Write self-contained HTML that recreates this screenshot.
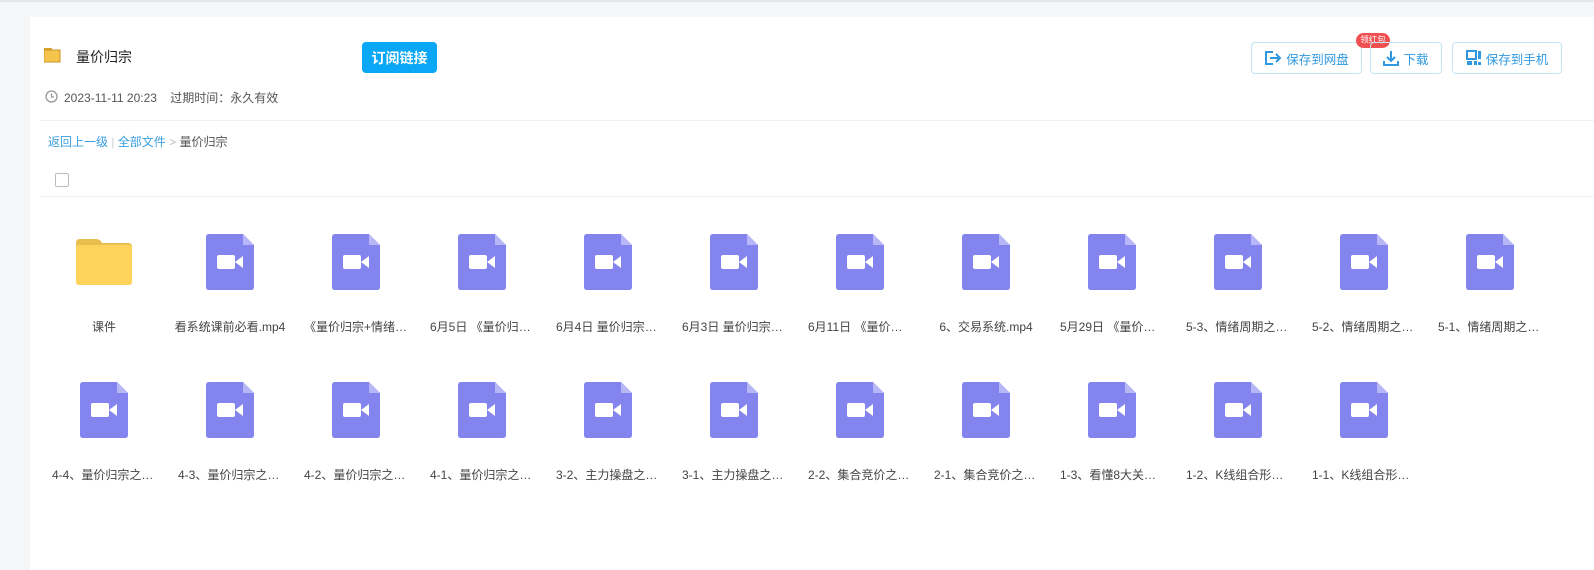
<!DOCTYPE html><html><head><meta charset="utf-8"><style>
*{margin:0;padding:0;box-sizing:border-box}
body{width:1594px;height:570px;background:#f5f6f7;font-family:"Liberation Sans","Noto Sans CJK SC",sans-serif;position:relative;overflow:hidden;font-size:12px;color:#333}
.top{position:absolute;left:0;top:0;width:1594px;height:2px;background:#e3e6ea}
.card{position:absolute;left:30px;top:17px;right:0;bottom:0;background:#fff}
.abs{position:absolute}
.btn{position:absolute;top:42px;height:32px;border:1px solid #c3e4f7;border-radius:4px;color:#2f98e0;font-size:12.5px;display:flex;align-items:center;justify-content:center;gap:4px}
.grid{position:absolute;left:41px;top:234px;width:1540px}
.cell{position:absolute;width:126px;height:120px}
.cell .ic{position:absolute;left:39px;top:0}
.cell .t{position:absolute;left:11px;top:84px;width:104px;text-align:center;white-space:nowrap;overflow:hidden;text-overflow:ellipsis;font-size:12px;color:#444}
.cell .t.w{left:3px;width:120px}
</style></head><body>
<div class="top"></div>
<div class="card"></div>
<svg class="abs" style="left:44px;top:48px" width="18" height="15"><rect x="0" y="0" width="8" height="4" fill="#d9a22e"/><rect x="0" y="2" width="16" height="12" fill="#f4c44c" stroke="#c9952a" stroke-width="1"/></svg>
<div class="abs" style="left:76px;top:47px;font-size:14px;color:#222">量价归宗</div>
<div class="abs" style="left:362px;top:42px;width:75px;height:31px;background:#09a7f5;border-radius:4px;color:#fff;font-size:14px;font-weight:bold;display:flex;align-items:center;justify-content:center">订阅链接</div>
<svg class="abs" style="left:45px;top:90px" width="13" height="13"><circle cx="6.5" cy="6.5" r="5.5" fill="none" stroke="#999" stroke-width="1.3"/><path d="M6.5 3.5V7H9" fill="none" stroke="#999" stroke-width="1.3"/></svg>
<div class="abs" style="left:64px;top:89px;color:#555">2023-11-11 20:23&nbsp;&nbsp;&nbsp;&nbsp;过期时间：永久有效</div>
<div class="abs" style="left:40px;top:120px;width:1554px;height:1px;background:#f0f0f0"></div>
<div class="abs" style="left:48px;top:133px;color:#3a9ede">返回上一级 <span style="color:#ccc">|</span> 全部文件 <span style="color:#bbb">&gt;</span> <span style="color:#555">量价归宗</span></div>
<div class="abs" style="left:55px;top:173px;width:14px;height:14px;border:1px solid #bbb;border-radius:2px"></div>
<div class="abs" style="left:40px;top:196px;width:1554px;height:1px;background:#f0f0f0"></div>
<div class="btn" style="left:1251px;width:111px"><svg width="18" height="16"><path d="M9 2H2v12h7" fill="none" stroke="#2f98e0" stroke-width="2"/><path d="M6 8h10M12 4l4 4-4 4" fill="none" stroke="#2f98e0" stroke-width="2"/></svg>保存到网盘</div>
<div class="abs" style="left:1356px;top:33px;width:34px;height:15px;background:#f0504f;border-radius:8px;color:#fff;font-size:10px;line-height:15px;text-align:center;overflow:hidden;white-space:nowrap"><span style="display:inline-block;transform:scale(0.85)">领红包</span></div>
<div class="btn" style="left:1370px;width:72px"><svg width="16" height="16"><path d="M8 1v10M4 7l4 4 4-4" fill="none" stroke="#2f98e0" stroke-width="2"/><path d="M1 11v4h14v-4" fill="none" stroke="#2f98e0" stroke-width="2"/></svg>下载</div>
<div class="btn" style="left:1452px;width:110px"><svg width="16" height="16"><rect x="1" y="1" width="9" height="8" fill="none" stroke="#2f98e0" stroke-width="2"/><rect x="12" y="1" width="3" height="8" fill="#2f98e0"/><rect x="1" y="11" width="5" height="4" fill="#2f98e0"/><rect x="8" y="11" width="3" height="4" fill="#2f98e0"/><rect x="12" y="12" width="3" height="3" fill="#2f98e0"/></svg>保存到手机</div>
<div class="grid" id="g"></div>
<script>
var x="短线交易课程.mp4";
var n=["课件","看系统课前必看.mp4","《量价归宗+情绪周期》"+x,"6月5日 《量价归宗》"+x,"6月4日 量价归宗之"+x,"6月3日 量价归宗之"+x,"6月11日 《量价归宗》"+x,"6、交易系统.mp4","5月29日 《量价归宗》"+x,"5-3、情绪周期之"+x,"5-2、情绪周期之"+x,"5-1、情绪周期之"+x,"4-4、量价归宗之"+x,"4-3、量价归宗之"+x,"4-2、量价归宗之"+x,"4-1、量价归宗之"+x,"3-2、主力操盘之"+x,"3-1、主力操盘之"+x,"2-2、集合竞价之"+x,"2-1、集合竞价之"+x,"1-3、看懂8大关键点位"+x,"1-2、K线组合形态之"+x,"1-1、K线组合形态之"+x];
var vid='<svg class="ic" width="48" height="56"><path d="M3 0H37L48 11V53Q48 56 45 56H3Q0 56 0 53V3Q0 0 3 0Z" fill="#8484ef"/><path d="M37 0L48 11H37Z" fill="#b7b7f7"/><rect x="11" y="21" width="18" height="14" rx="2" fill="#fff"/><path d="M29 28L37 22V34Z" fill="#fff"/></svg>';
var fol='<svg class="ic" style="left:35px;top:5px" width="56" height="46"><path d="M0 4Q0 0 4 0H20Q24 0 26 4H52Q56 4 56 8V42Q56 46 52 46H4Q0 46 0 42Z" fill="#e8bf4d"/><rect x="0" y="6" width="56" height="40" rx="3" fill="#fdd35b"/></svg>';
var h='';n.forEach(function(s,i){var r=Math.floor(i/12),c=i%12;var w=(i==1||i==7)?' w':'';h+='<div class="cell" style="left:'+(c*126)+'px;top:'+(r*148)+'px">'+(i?vid:fol)+'<div class="t'+w+'">'+s+'</div></div>';});
document.getElementById('g').innerHTML=h;
</script>
</body></html>
